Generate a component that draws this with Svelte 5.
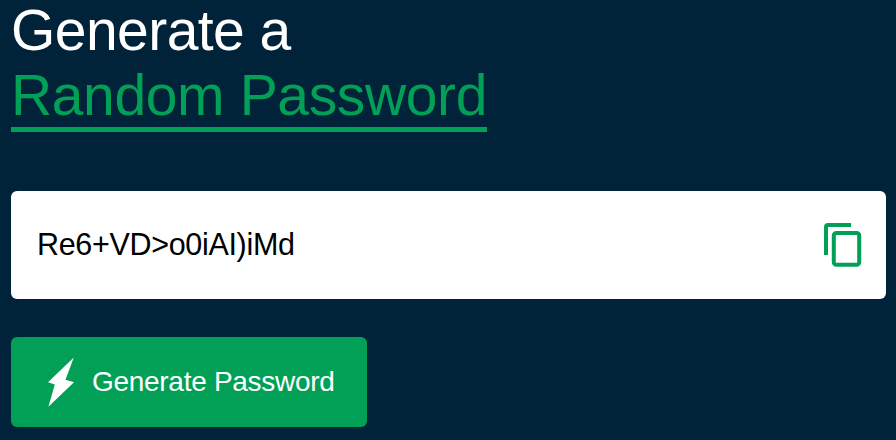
<script>
  let password = $state('Re6+VD>o0iAI)iMd');
  const chars = 'ABCDEFGHIJKLMNOPQRSTUVWXYZabcdefghijklmnopqrstuvwxyz0123456789+-<>()!?%&';

  function generate() {
    password = Array.from({ length: 16 }, () => chars[Math.floor(Math.random() * chars.length)]).join('');
  }

  function copy() {
    navigator.clipboard?.writeText(password);
  }
</script>

<main>
  <h1>
    <span class="lead">Generate a</span>
    <span class="accent">Random Password</span>
  </h1>

  <div class="display">
    <output>{password}</output>
    <button class="copy" aria-label="Copy password" onclick={copy}>
      <svg width="38" height="44" viewBox="0 0 38 44" fill="none" stroke="#02a056" stroke-width="4">
        <path d="M2 32V4q0-2 2-2h23" />
        <rect x="9.8" y="9.9" width="25.4" height="31.9" rx="2.6" />
      </svg>
    </button>
  </div>

  <button class="generate" onclick={generate}>
    <svg width="26" height="50" viewBox="0 0 26 50" fill="#fff">
      <path d="M25.8 .4L0 25.2l6.8 2.3L.4 49.8 26 25.2l-8.5-2.4z" />
    </svg>
    <span>Generate Password</span>
  </button>
</main>

<style>
  :global(body) {
    background: #002339;
  }

  main {
    box-sizing: border-box;
    display: flex;
    flex-direction: column;
    align-items: flex-start;
    height: 440px;
    padding: 0 10px 0 11px;
    background: #002339;
    font-family: 'Liberation Sans', Arial, sans-serif;
  }

  h1 {
    display: flex;
    flex-direction: column;
    align-items: flex-start;
    height: 191px;
    margin: 0;
    color: #fff;
    font-size: 57px;
    font-weight: 400;
    letter-spacing: -0.37px;
    line-height: 61px;
    white-space: nowrap;
  }

  .lead {
    height: 65px;
    letter-spacing: -0.55px;
  }

  .accent {
    height: 62px;
    border-bottom: 5px solid #02a056;
    color: #02a056;
  }

  .display {
    box-sizing: border-box;
    display: flex;
    align-items: center;
    justify-content: space-between;
    align-self: stretch;
    height: 108px;
    padding: 0 24px 0 26px;
    border-radius: 6px;
    background: #fff;
  }

  output {
    padding-bottom: 2px;
    color: #000;
    font-size: 30.5px;
    letter-spacing: -0.32px;
    line-height: 36px;
  }

  button {
    display: flex;
    align-items: center;
    border: 0;
    font-family: inherit;
    cursor: pointer;
  }

  .copy {
    padding: 0;
    background: none;
  }

  .generate {
    gap: 18px;
    width: 356px;
    height: 90px;
    margin-top: 38px;
    padding: 0 0 0 37px;
    border-radius: 6px;
    background: #02a056;
    color: #fff;
    font-size: 28px;
    letter-spacing: -0.29px;
    white-space: nowrap;
  }
</style>
